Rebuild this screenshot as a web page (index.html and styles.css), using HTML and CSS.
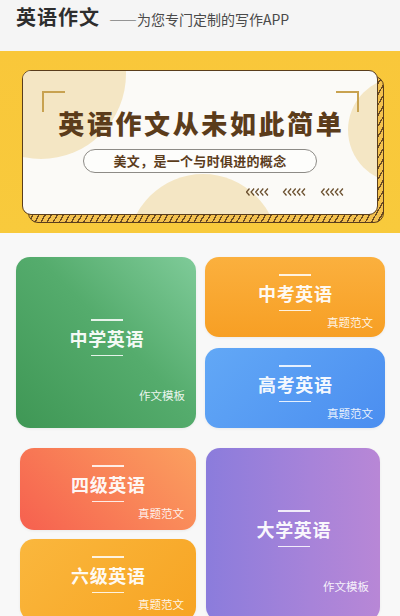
FILE: index.html
```html
<!DOCTYPE html>
<html lang="zh">
<head>
<meta charset="utf-8">
<title>英语作文</title>
<link rel="stylesheet" href="styles.css">
</head>
<body>
<header class="top">
  <h1 class="app-title">英语作文</h1>
  <span class="app-sub">——为您专门定制的写作APP</span>
</header>

<section class="banner">
  <div class="frame">
    <div class="card">
      <span class="circle c1"></span>
      <span class="circle c2"></span>
      <span class="circle c3"></span>
      <span class="bracket bl"></span>
      <span class="bracket br"></span>
      <h2 class="slogan">英语作文从未如此简单</h2>
      <div class="pill">美文，是一个与时俱进的概念</div>
      <svg class="chevrons" width="98" height="10" viewBox="0 0 98 10">
        <path d="M3.5 1.5L0.5 5L3.5 8.5M8.1 1.5L5.1 5L8.1 8.5M12.7 1.5L9.7 5L12.7 8.5M17.3 1.5L14.3 5L17.3 8.5M21.9 1.5L18.9 5L21.9 8.5M40.5 1.5L37.5 5L40.5 8.5M45.1 1.5L42.1 5L45.1 8.5M49.7 1.5L46.7 5L49.7 8.5M54.3 1.5L51.3 5L54.3 8.5M58.9 1.5L55.9 5L58.9 8.5M78.5 1.5L75.5 5L78.5 8.5M83.1 1.5L80.1 5L83.1 8.5M87.7 1.5L84.7 5L87.7 8.5M92.3 1.5L89.3 5L92.3 8.5M96.9 1.5L93.9 5L96.9 8.5" fill="none" stroke="#6a4f2e" stroke-width="1.3"/>
      </svg>
    </div>
  </div>
</section>

<section class="grid grid-a">
  <a class="tile big green">
    <div class="mid"><i class="ln"></i><span class="name">中学英语</span><i class="ln"></i></div>
    <span class="sub">作文模板</span>
  </a>
  <a class="tile orange">
    <div class="mid"><i class="ln"></i><span class="name">中考英语</span><i class="ln"></i></div>
    <span class="sub">真题范文</span>
  </a>
  <a class="tile blue">
    <div class="mid"><i class="ln"></i><span class="name">高考英语</span><i class="ln"></i></div>
    <span class="sub">真题范文</span>
  </a>
</section>

<section class="grid grid-b">
  <a class="tile red">
    <div class="mid"><i class="ln"></i><span class="name">四级英语</span><i class="ln"></i></div>
    <span class="sub">真题范文</span>
  </a>
  <a class="tile big purple">
    <div class="mid"><i class="ln"></i><span class="name">大学英语</span><i class="ln"></i></div>
    <span class="sub">作文模板</span>
  </a>
  <a class="tile amber">
    <div class="mid"><i class="ln"></i><span class="name">六级英语</span><i class="ln"></i></div>
    <span class="sub">真题范文</span>
  </a>
</section>
</body>
</html>
```

FILE: styles.css
```css
* { box-sizing: border-box; }
html, body { margin: 0; padding: 0; }
body {
  background: #f8f8f8;
  font-family: "Noto Sans CJK SC", "Noto Sans", sans-serif;
  width: 400px;
  overflow: hidden;
}

.top {
  height: 51px;
  background: #f5f5f5;
  display: flex;
  align-items: baseline;
  padding: 5px 0 0 16px;
}
.app-title {
  margin: 0;
  font-size: 20px;
  line-height: 24px;
  font-weight: 700;
  color: #2e2e2e;
  letter-spacing: 1px;
}
.app-sub {
  margin-left: 9px;
  font-size: 14px;
  color: #4a4a4a;
}

.banner {
  background: linear-gradient(180deg, #f9c73a 0%, #f8ca3c 100%);
  padding: 19px 17px 18px 22px;
}
.frame {
  position: relative;
  width: 356px;
}
.frame::before {
  content: "";
  position: absolute;
  top: 6px; left: 6px; right: -6px; bottom: -8px;
  border: 1.5px solid #5a3d1c;
  border-radius: 10px;
  background: repeating-linear-gradient(-60deg, #f3c14e 0 4px, #6a4a22 4px 5.3px);
}
.card {
  position: relative;
  height: 145px;
  border: 1.5px solid #5a3d1c;
  border-radius: 9px;
  background: #fbfaf7;
  overflow: hidden;
  display: flex;
  flex-direction: column;
  align-items: center;
  padding-top: 36px;
}
.circle {
  position: absolute;
  border-radius: 50%;
  background: #f4e6c4;
}
.c1 { width: 170px; height: 170px; left: -67px; top: -82px; }
.c2 { width: 150px; height: 150px; left: 105px; top: 103px; }
.c3 { width: 106px; height: 106px; left: 325px; top: 6px; }
.bracket {
  position: absolute;
  top: 20px;
  width: 23px;
  height: 21px;
  border-top: 2px solid #c8a250;
}
.bl { left: 19px; border-left: 2px solid #c8a250; }
.br { right: 18px; border-right: 2px solid #c8a250; }

.slogan {
  position: relative;
  margin: 0;
  font-size: 26px;
  line-height: 32px;
  font-weight: 900;
  color: #5b3c1b;
  letter-spacing: 2.6px;
  padding-left: 2.6px;
}
.pill {
  position: relative;
  margin-top: 10px;
  width: 234px;
  height: 24px;
  border: 1.5px solid #8d8b86;
  border-radius: 12px;
  background: #fdfdfb;
  text-align: center;
  font-size: 13px;
  line-height: 21px;
  font-weight: 700;
  color: #5b3c1b;
  letter-spacing: 0.3px;
}
.chevrons {
  position: relative;
  display: block;
  align-self: flex-end;
  margin: 14px 33px 0 0;
}

.grid {
  display: grid;
}
.grid-a {
  margin-top: 24px;
  padding: 0 15px 0 16px;
  grid-template-columns: 180px 180px;
  grid-template-rows: 80px 80px;
  column-gap: 9px;
  row-gap: 11px;
}
.grid-b {
  margin-top: 20px;
  padding: 0 20px;
  grid-template-columns: 176px 174px;
  grid-template-rows: 82px 82px;
  column-gap: 10px;
  row-gap: 9px;
}
.grid-a .big { grid-column: 1; grid-row: 1 / span 2; }
.grid-b .big { grid-column: 2; grid-row: 1 / span 2; }

.tile {
  display: flex;
  flex-direction: column;
  align-items: center;
  border-radius: 14px;
  color: #fff;
  text-decoration: none;
  padding: 17px 12px 0 12px;
  box-shadow: 0 1px 3px rgba(0,0,0,0.06);
}
.tile.big { padding-top: 62px; padding-right: 11px; }
.mid {
  display: flex;
  flex-direction: column;
  align-items: center;
}
.ln {
  display: block;
  width: 32px;
  height: 1.5px;
  background: rgba(255,255,255,0.85);
}
.name {
  margin: 7px 0;
  font-size: 18px;
  line-height: 20px;
  font-weight: 700;
  letter-spacing: 0.6px;
  padding-left: 0.6px;
  color: rgba(255,255,255,0.96);
}
.sub {
  align-self: flex-end;
  margin-top: 4px;
  font-size: 11.5px;
  line-height: 14px;
  color: rgba(255,255,255,0.9);
}
.tile.big .sub { margin-top: 32px; }

.green { background: linear-gradient(225deg, #7fcb99 0%, #55ac6d 45%, #3f9755 100%); }
.orange { background: linear-gradient(180deg, #fbb03e 0%, #f79f24 100%); }
.blue { background: linear-gradient(135deg, #62a8f6 0%, #4b8ef0 100%); }
.red { background: linear-gradient(45deg, #f6604f 0%, #f98458 55%, #fba05f 100%); }
.amber { background: linear-gradient(135deg, #fab73d 0%, #f7a423 100%); }
.purple { background: linear-gradient(90deg, #8b7cdc 0%, #a783d9 60%, #b887d6 100%); }
```
